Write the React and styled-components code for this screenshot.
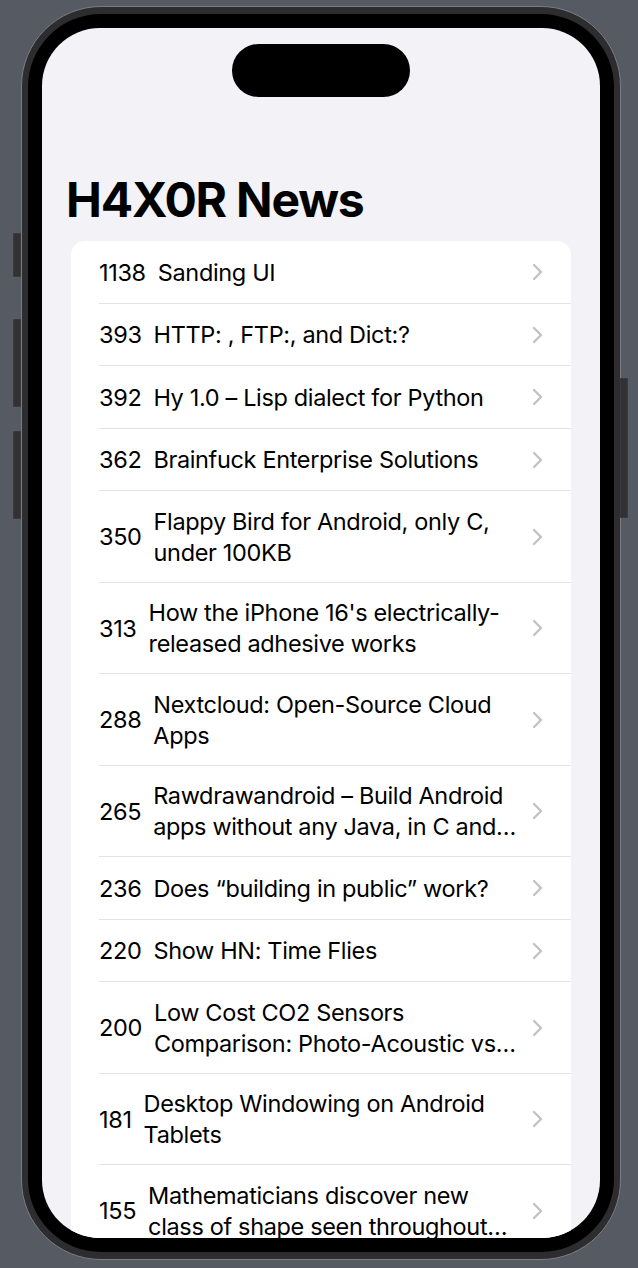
import React from "react";
import styled, { createGlobalStyle } from "styled-components";

const GlobalStyle = createGlobalStyle`
  html, body {
    margin: 0;
    padding: 0;
    background: #565b63;
  }
  body {
    font-family: Inter, "Noto Sans", "Liberation Sans", sans-serif;
    -webkit-font-smoothing: antialiased;
  }
`;

const Stage = styled.div`
  width: 638px;
  height: 1268px;
  box-sizing: border-box;
  padding: 6px 17px 8px 21px;
  background: #565b63;
  overflow: hidden;
`;

const Phone = styled.div`
  position: relative;
  width: 600px;
  height: 1254px;
  box-sizing: border-box;
  border: 1px solid #7b7d82;
  border-radius: 80px;
  background: #2d2d2f;
  padding: 7px 6px;
`;

const SideButton = styled.div`
  position: absolute;
  width: 8px;
  top: ${(p) => p.$top}px;
  height: ${(p) => p.$height}px;
  ${(p) => (p.$right ? "right: -8px;" : "left: -9px;")}
  background: #323234;
  border-radius: ${(p) => (p.$right ? "0 2px 2px 0" : "2px 0 0 2px")};
  box-shadow: inset 0 0 0 1px #3a3a3c;
`;

const Bezel = styled.div`
  height: 100%;
  box-sizing: border-box;
  background: #000;
  border-radius: 73px;
  padding: 14px;
`;

const Screen = styled.div`
  height: 1210px;
  background: #f2f2f7;
  border-radius: 58px;
  overflow: hidden;
  display: flex;
  flex-direction: column;
`;

const IslandRow = styled.div`
  display: flex;
  justify-content: center;
  padding-top: 16px;
`;

const Island = styled.div`
  width: 178px;
  height: 53px;
  border-radius: 27px;
  background: #000;
`;

const Title = styled.h1`
  margin: 74px 0 0 24px;
  font-size: 48px;
  line-height: 58px;
  font-weight: 700;
  letter-spacing: -1.2px;
  color: #000;
`;

const Card = styled.ul`
  list-style: none;
  margin: 12px 29px 0 29px;
  padding: 0 0 0 28px;
  background: #fff;
  border-radius: 14px;
`;

const Row = styled.li`
  display: flex;
  align-items: center;
  min-height: 62.5px;
  box-sizing: border-box;
  padding: 14.5px 28px 14px 0;
  border-bottom: 1px solid #e3e3e6;
  font-size: 23.5px;
  line-height: 31px;
  letter-spacing: -0.35px;
  color: #000;
`;

const Points = styled.span`
  flex: none;
  margin-right: 12px;
`;

const Headline = styled.span`
  flex: 1;
  min-width: 0;
  display: -webkit-box;
  -webkit-box-orient: vertical;
  -webkit-line-clamp: 2;
  overflow: hidden;
  margin-right: 10px;
`;

const Chevron = styled.svg`
  flex: none;
  width: 11px;
  height: 18px;
`;

const stories = [
  [1138, "Sanding UI"],
  [393, "HTTP: , FTP:, and Dict:?"],
  [392, "Hy 1.0 – Lisp dialect for Python"],
  [362, "Brainfuck Enterprise Solutions"],
  [350, "Flappy Bird for Android, only C, under 100KB"],
  [313, "How the iPhone 16's electrically-released adhesive works"],
  [288, "Nextcloud: Open-Source Cloud Apps"],
  [265, "Rawdrawandroid – Build Android apps without any Java, in C and Make"],
  [236, "Does “building in public” work?"],
  [220, "Show HN: Time Flies"],
  [200, "Low Cost CO2 Sensors Comparison: Photo-Acoustic vs NDIR"],
  [181, "Desktop Windowing on Android Tablets"],
  [155, "Mathematicians discover new class of shape seen throughout nature"],
];

export default function App() {
  return (
    <>
      <GlobalStyle />
      <Stage>
        <Phone>
          <SideButton $top={226} $height={44} />
          <SideButton $top={312} $height={88} />
          <SideButton $top={424} $height={88} />
          <SideButton $right $top={371} $height={140} />
          <Bezel>
            <Screen>
              <IslandRow>
                <Island />
              </IslandRow>
              <Title>H4X0R News</Title>
              <Card>
                {stories.map(([pts, title]) => (
                  <Row key={pts}>
                    <Points>{pts}</Points>
                    <Headline>{title}</Headline>
                    <Chevron viewBox="0 0 11 18">
                      <polyline
                        points="2,2 9,9 2,16"
                        fill="none"
                        stroke="#c2c2c6"
                        strokeWidth="2.4"
                        strokeLinecap="round"
                        strokeLinejoin="round"
                      />
                    </Chevron>
                  </Row>
                ))}
              </Card>
            </Screen>
          </Bezel>
        </Phone>
      </Stage>
    </>
  );
}
